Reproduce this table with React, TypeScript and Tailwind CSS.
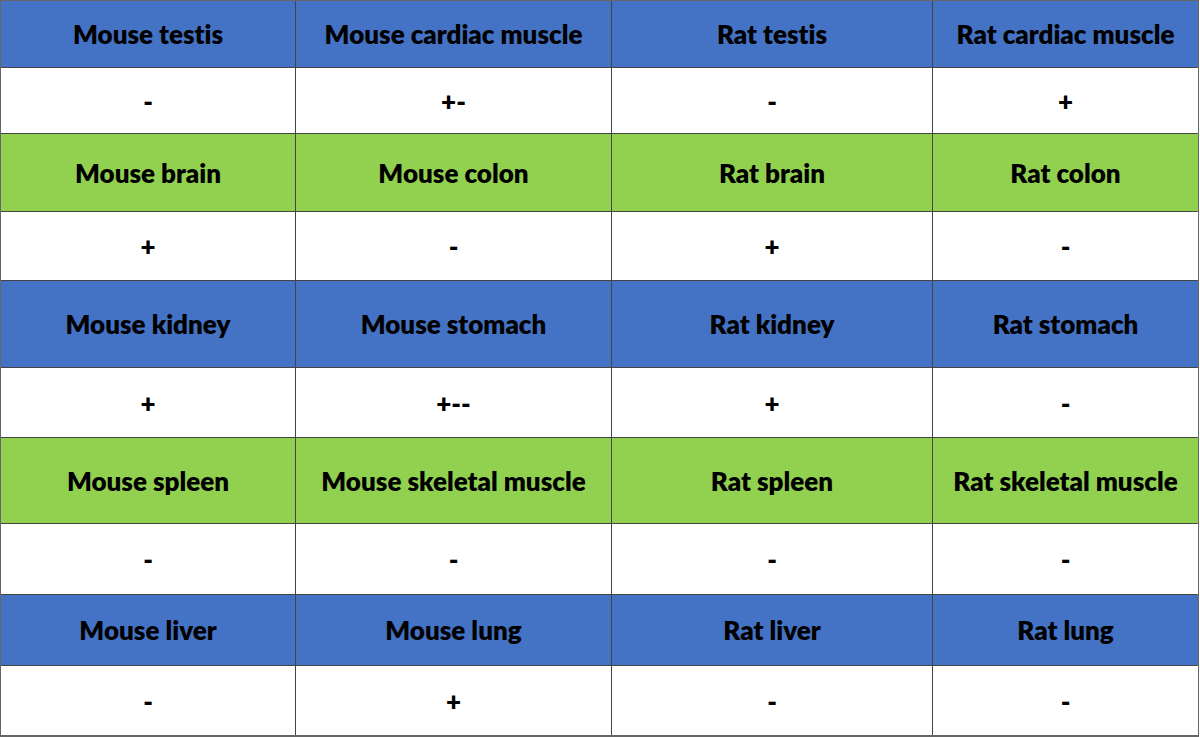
type Row = { tone: string; names: string[]; values: string[]; h: string; vh: string }

const rows: Row[] = [
  { tone: "bg-[#4472c4]", names: ["Mouse testis", "Mouse cardiac muscle", "Rat testis", "Rat cardiac muscle"], values: ["-", "+-", "-", "+"], h: "h-[66px]", vh: "h-[65px]" },
  { tone: "bg-[#92d050]", names: ["Mouse brain", "Mouse colon", "Rat brain", "Rat colon"], values: ["+", "-", "+", "-"], h: "h-[77px]", vh: "h-[68px]" },
  { tone: "bg-[#4472c4]", names: ["Mouse kidney", "Mouse stomach", "Rat kidney", "Rat stomach"], values: ["+", "+--", "+", "-"], h: "h-[86px]", vh: "h-[69px]" },
  { tone: "bg-[#92d050]", names: ["Mouse spleen", "Mouse skeletal muscle", "Rat spleen", "Rat skeletal muscle"], values: ["-", "-", "-", "-"], h: "h-[85px]", vh: "h-[70px]" },
  { tone: "bg-[#4472c4]", names: ["Mouse liver", "Mouse lung", "Rat liver", "Rat lung"], values: ["-", "+", "-", "-"], h: "h-[70px]", vh: "h-[69px]" },
]

function Cell({ text, bg, h }: { text: string; bg: string; h: string }) {
  return (
    <div className={`${bg} ${h} flex items-center justify-center font-extrabold text-[26px] text-black leading-none [font-variant-ligatures:none]`}>
      {text}
    </div>
  )
}

export default function App() {
  return (
    <div className="w-[1200px] h-[737px] bg-white font-['Lato','Open_Sans',sans-serif]">
      <div className="w-[1199px] grid grid-cols-[294px_315px_320px_265px] gap-px bg-[#444] border-l border-t border-r-2 border-b-2 border-[#666]">
        {rows.map((row, r) => [
          ...row.names.map((n) => <Cell key={`n${r}${n}`} text={n} bg={row.tone} h={row.h} />),
          ...row.values.map((v, i) => <Cell key={`v${r}${i}`} text={v} bg="bg-white" h={row.vh} />),
        ])}
      </div>
    </div>
  )
}
